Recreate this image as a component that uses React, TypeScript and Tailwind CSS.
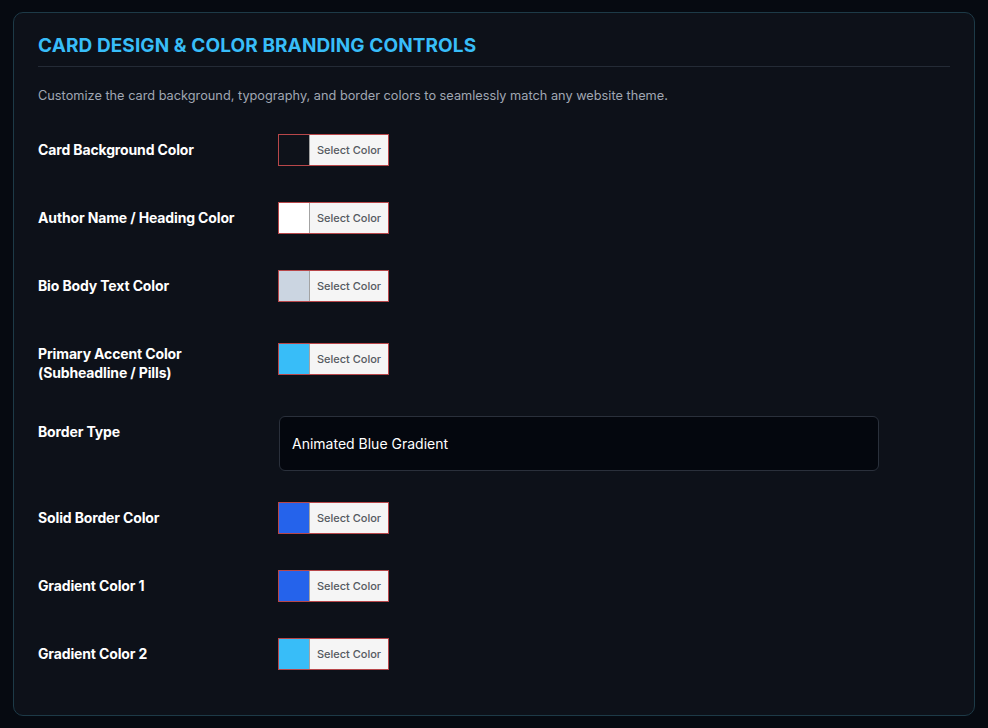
import React from "react";

type ColorRow = {
    label: React.ReactNode;
    color: string;
    className?: string;
};

const ColorPicker: React.FC<{ color: string }> = ({ color }) => (
    <div className="flex h-[32px] w-[111px] border border-[#b8474a] bg-[#f5f5f5]">
        <div className="w-[31px] h-full border-r border-[#a3a3a3]" style={{ backgroundColor: color }} />
        <button className="flex-1 text-[11px] font-medium text-[#555a61] text-center leading-none">
            Select Color
        </button>
    </div>
);

const Row: React.FC<{ label: React.ReactNode; className?: string; labelClass?: string; children: React.ReactNode }> = ({
    label,
    className = "",
    labelClass = "pt-[6px]",
    children,
}) => (
    <div className={`flex items-start ${className}`}>
        <div className={`w-[240px] text-[14px] leading-[19px] font-bold tracking-[-0.01em] text-white ${labelClass}`}>
            {label}
        </div>
        {children}
    </div>
);

const App: React.FC = () => {
    const topRows: ColorRow[] = [
        { label: "Card Background Color", color: "#0e121a" },
        { label: "Author Name / Heading Color", color: "#ffffff", className: "mt-[36px]" },
        { label: "Bio Body Text Color", color: "#cbd5e1", className: "mt-[36px]" },
    ];

    const bottomRows: ColorRow[] = [
        { label: "Solid Border Color", color: "#2563eb", className: "mt-[31px]" },
        { label: "Gradient Color 1", color: "#2563eb", className: "mt-[36px]" },
        { label: "Gradient Color 2", color: "#38bdf8", className: "mt-[36px]" },
    ];

    return (
        <div
            className="min-h-screen w-full bg-[#060a11] pt-[12px] px-[13px] pb-[12px]"
            style={{ fontFamily: "Inter, 'Liberation Sans', sans-serif" }}
        >
            <div className="rounded-[10px] border border-[#1d3a47] bg-[#0d1119] px-[24px] pt-[21px] pb-[45px]">
                <h2 className="text-[19px] leading-[24px] font-bold uppercase tracking-[0.005em] text-[#38bdf8] pb-[8px] border-b border-[#242b36]">
                    Card Design &amp; Color Branding Controls
                </h2>
                <p className="mt-[19px] text-[12.75px] leading-[20px] text-[#a0a7b3]">
                    Customize the card background, typography, and border colors to seamlessly match any website theme.
                </p>

                <div className="mt-[28px] flex flex-col">
                    {topRows.map((row, i) => (
                        <Row key={i} label={row.label} className={row.className}>
                            <ColorPicker color={row.color} />
                        </Row>
                    ))}

                    <Row
                        label={
                            <>
                                Primary Accent Color
                                <br />
                                (Subheadline / Pills)
                            </>
                        }
                        labelClass="pt-[1px]"
                        className="mt-[41px]"
                    >
                        <ColorPicker color="#38bdf8" />
                    </Row>

                    <Row label="Border Type" className="mt-[34px]">
                        <div className="ml-[1px] flex h-[55px] w-[600px] items-center rounded-[6px] border border-[#2a303b] bg-[#04070e] px-[12px] text-[14px] text-white">
                            Animated Blue Gradient
                        </div>
                    </Row>

                    {bottomRows.map((row, i) => (
                        <Row key={i} label={row.label} className={row.className}>
                            <ColorPicker color={row.color} />
                        </Row>
                    ))}
                </div>
            </div>
        </div>
    );
};

export default App;
